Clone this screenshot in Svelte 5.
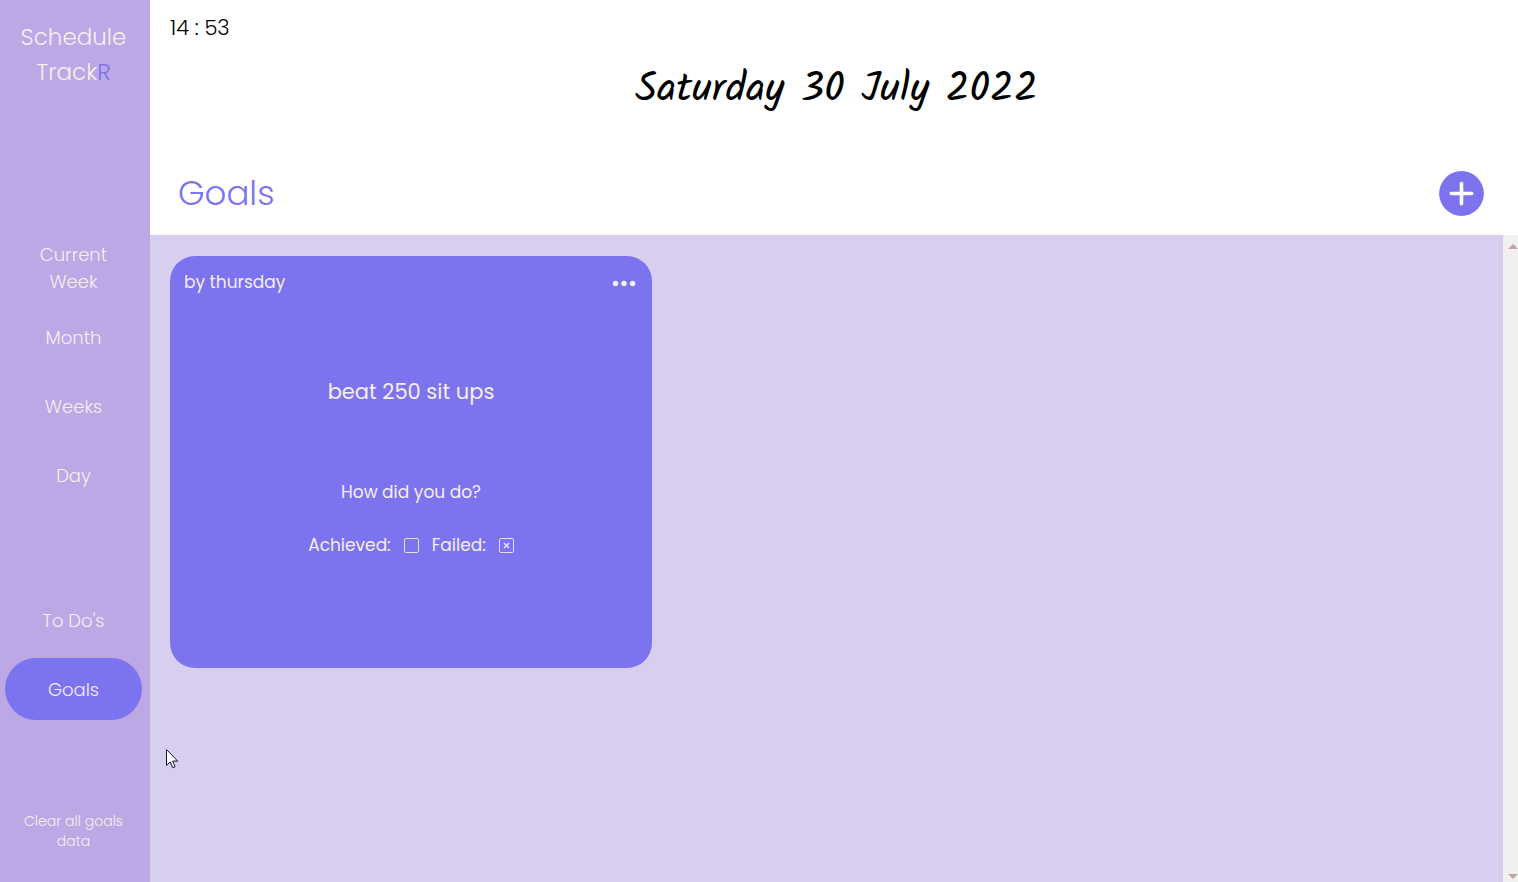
<script>
  const calendarViews = ['Current Week', 'Month', 'Weeks', 'Day'];
  const lists = ["To Do's", 'Goals'];
  let active = $state('Goals');
  let goals = $state([
    { due: 'by thursday', title: 'beat 250 sit ups', achieved: false, failed: true }
  ]);
</script>

<div class="app">
  <aside class="sidebar">
    <h2 class="brand">Schedule Track<span>R</span></h2>
    <nav class="views">
      {#each calendarViews as view}
        <a href="#view" class:active={active === view} onclick={() => (active = view)}>{view}</a>
      {/each}
    </nav>
    <nav class="lists">
      {#each lists as list}
        <a href="#list" class:active={active === list} onclick={() => (active = list)}>{list}</a>
      {/each}
    </nav>
    <button class="clear">Clear all goals data</button>
  </aside>

  <main>
    <header>
      <time class="clock">14 : 53</time>
      <p class="date">Saturday 30 July 2022</p>
      <div class="heading">
        <h1>Goals</h1>
        <button class="add" aria-label="Add goal">
          <svg viewBox="0 0 45 45" width="45" height="45" aria-hidden="true">
            <circle cx="22.5" cy="22.5" r="22.4" fill="#7c74ee" />
            <path d="M22.5 12.6v20.2M12.3 22.5h20.4" stroke="#fff" stroke-width="3.6" stroke-linecap="round" />
          </svg>
        </button>
      </div>
    </header>

    <div class="board">
      <section class="goals">
        {#each goals as goal, i}
          <article class="card">
            <div class="card-top">
              <span>{goal.due}</span>
              <button class="more" aria-label="Goal options">
                <svg viewBox="0 0 24 8" width="24" height="8" aria-hidden="true">
                  <circle cx="3.5" cy="4.5" r="2.7" /><circle cx="12" cy="4.5" r="2.7" /><circle cx="20.6" cy="4.5" r="2.7" />
                </svg>
              </button>
            </div>
            <h3>{goal.title}</h3>
            <p class="question">How did you do?</p>
            <div class="result">
              <label for="achieved-{i}">Achieved:</label>
              <span class="tick">
                <input id="achieved-{i}" type="checkbox" bind:checked={goal.achieved} />
                {#if goal.achieved}
                  <svg viewBox="0 0 15 15" aria-hidden="true"><path d="M5 5l5 5M10 5l-5 5" /></svg>
                {/if}
              </span>
              <label for="failed-{i}">Failed:</label>
              <span class="tick">
                <input id="failed-{i}" type="checkbox" bind:checked={goal.failed} />
                {#if goal.failed}
                  <svg viewBox="0 0 15 15" aria-hidden="true"><path d="M5 5l5 5M10 5l-5 5" /></svg>
                {/if}
              </span>
            </div>
          </article>
        {/each}
      </section>
      <div class="scrollbar" aria-hidden="true">
        <svg viewBox="0 0 10 5" width="10" height="5"><path d="M0 5L5 0l5 5z" /></svg>
        <svg viewBox="0 0 10 5" width="10" height="5"><path d="M0 0h10L5 5z" /></svg>
      </div>
    </div>
  </main>

  <svg class="pointer" viewBox="0 0 13 20" width="13" height="20" aria-hidden="true">
    <path d="M.5.5v16l3.7-3.6 2.5 5.8 2.4-1-2.5-5.6h5.1z" fill="#fff" stroke="#10103a" stroke-width="1" />
  </svg>
</div>

<style>
  :global(body) {
    margin: 0;
  }
  .app {
    --violet: #7c74ee;
    --cream: #f5eeee;
    display: grid;
    grid-template-columns: 150px 1fr;
    min-height: 100vh;
    font-family: Poppins, Inter, sans-serif;
    color: #000;
  }
  h1, h2, h3, p {
    margin: 0;
    font-weight: 400;
  }
  button {
    border: 0;
    padding: 0;
    background: none;
    font: inherit;
    color: inherit;
    cursor: pointer;
  }
  svg {
    display: block;
  }

  .sidebar {
    box-sizing: border-box;
    display: flex;
    flex-direction: column;
    padding: 20px 8px 31px 5px;
    background: #bba8e4;
    color: var(--cream);
    text-align: center;
  }
  .brand {
    padding: 0 12px;
    font-size: 23px;
    line-height: 35px;
    font-weight: 300;
  }
  .brand span {
    color: var(--violet);
  }
  .views, .lists {
    display: flex;
    flex-direction: column;
    gap: 7px;
  }
  .views {
    margin-top: 147px;
  }
  .lists {
    margin-top: 83px;
  }
  nav a {
    box-sizing: border-box;
    display: flex;
    align-items: center;
    justify-content: center;
    min-height: 62px;
    padding: 0 32px;
    border-radius: 31px;
    font-size: 18px;
    line-height: 27px;
    font-weight: 300;
    color: inherit;
    text-decoration: none;
  }
  nav a.active {
    background: var(--violet);
  }
  .clear {
    margin-top: auto;
    padding: 0 16px;
    font-size: 14px;
    line-height: 20px;
    font-weight: 300;
  }

  main {
    display: flex;
    flex-direction: column;
    min-width: 0;
  }
  header {
    display: flex;
    flex-direction: column;
    padding: 12px 15px 15px 20px;
  }
  .clock {
    font-size: 21px;
    line-height: 32px;
    font-weight: 300;
  }
  .date {
    margin-top: 14px;
    font-family: Kalam, "Open Sans", cursive;
    font-size: 41px;
    line-height: 64px;
    text-align: center;
  }
  .heading {
    display: flex;
    align-items: center;
    justify-content: space-between;
    margin-top: 44px;
    padding: 0 19px 0 8px;
  }
  h1 {
    font-size: 34px;
    line-height: 54px;
    font-weight: 300;
    color: var(--violet);
  }

  .board {
    flex: 1;
    display: flex;
    background: #d8ceef;
  }
  .goals {
    flex: 1;
    display: flex;
    flex-wrap: wrap;
    align-content: flex-start;
    gap: 20px;
    padding: 21px 20px;
  }
  .scrollbar {
    box-sizing: border-box;
    width: 15px;
    display: flex;
    flex-direction: column;
    align-items: flex-end;
    justify-content: space-between;
    padding: 9px 0 3px;
    background: #f0f0f0;
  }
  .scrollbar path {
    fill: #bfa5a3;
  }

  .card {
    box-sizing: border-box;
    width: 482px;
    max-width: 100%;
    min-height: 412px;
    display: flex;
    flex-direction: column;
    align-items: center;
    padding: 14px;
    border-radius: 25px;
    background: var(--violet);
    color: var(--cream);
    font-size: 17px;
    line-height: 25px;
  }
  .card-top {
    width: 100%;
    box-sizing: border-box;
    display: flex;
    align-items: center;
    justify-content: space-between;
    padding-right: 2px;
  }
  .more circle {
    fill: var(--cream);
  }
  .card h3 {
    margin-top: 81px;
    font-size: 21px;
    line-height: 32px;
  }
  .question {
    margin-top: 72px;
  }
  .result {
    display: flex;
    align-items: center;
    gap: 13px;
    margin-top: 28px;
  }
  .tick {
    display: grid;
    width: 15px;
    height: 15px;
  }
  .tick > * {
    grid-area: 1 / 1;
    width: 100%;
    height: 100%;
  }
  .tick input {
    appearance: none;
    box-sizing: border-box;
    margin: 0;
    border: 1px solid #e6def0;
    border-radius: 2px;
  }
  .tick svg {
    pointer-events: none;
  }
  .tick path {
    fill: none;
    stroke: #e6def0;
    stroke-width: 1.7;
  }

  .pointer {
    position: absolute;
    left: 166px;
    top: 749px;
    pointer-events: none;
  }
</style>
